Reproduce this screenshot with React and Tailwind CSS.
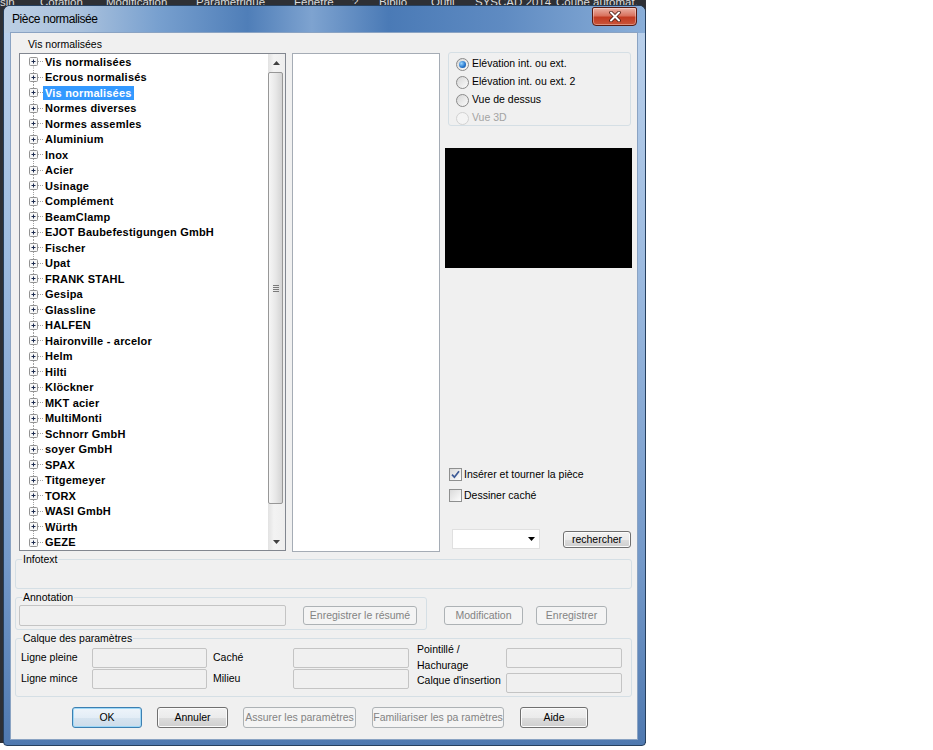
import React from "react";

const treeItems = [
  "Vis normalisées",
  "Ecrous normalisés",
  "Vis normalisées",
  "Normes diverses",
  "Normes assemles",
  "Aluminium",
  "Inox",
  "Acier",
  "Usinage",
  "Complément",
  "BeamClamp",
  "EJOT Baubefestigungen GmbH",
  "Fischer",
  "Upat",
  "FRANK STAHL",
  "Gesipa",
  "Glassline",
  "HALFEN",
  "Haironville - arcelor",
  "Helm",
  "Hilti",
  "Klöckner",
  "MKT acier",
  "MultiMonti",
  "Schnorr GmbH",
  "soyer GmbH",
  "SPAX",
  "Titgemeyer",
  "TORX",
  "WASI GmbH",
  "Würth",
  "GEZE",
];

const menu = [
  ["sin", "w-[40px]"],
  ["Cotation", "w-[66px]"],
  ["Modification", "w-[90px]"],
  ["Paramétrique", "w-[98px]"],
  ["Fenêtre", "w-[58px]"],
  ["?", "w-[27px]"],
  ["Biblio", "w-[52px]"],
  ["Outil", "w-[44px]"],
  ["SYSCAD 2014", "w-[81px]"],
  ["Coupe automat.", "w-[90px]"],
];

function Btn({ children, disabled, isDefault, className = "" }) {
  let look =
    "border-[#707070] text-black bg-[linear-gradient(#f2f2f2_0%,#ebebeb_50%,#dddddd_51%,#cfcfcf_100%)] shadow-[inset_0_0_0_1px_#fbfbfb]";
  if (disabled) look = "border-[#adb2b5] bg-[#f4f4f4] text-[#838383]";
  if (isDefault)
    look =
      "border-[#3c7fb1] text-black bg-[linear-gradient(#eef4fa_0%,#e3edf6_50%,#d6e4f0_51%,#cddcea_100%)] shadow-[inset_0_0_0_1px_#9ed8f7]";
  return (
    <div
      className={`flex shrink-0 items-center justify-center whitespace-nowrap rounded-[3px] border text-[10.5px] leading-none ${look} ${className}`}
    >
      {children}
    </div>
  );
}

function Field({ className = "" }) {
  return <div className={`rounded-[2px] border border-[#c4c4c4] bg-[#f0f0f0] ${className}`} />;
}

function GroupBox({ label, className = "", children }) {
  return (
    <div className={`shrink-0 rounded-[3px] border border-[#d5dfe5] ${className}`}>
      {label && (
        <div className="-mt-[7px] ml-[6px] w-fit bg-[#f0f0f0] px-[1px] leading-[13px]">{label}</div>
      )}
      {children}
    </div>
  );
}

function Radio({ label, checked, disabled }) {
  return (
    <div className="flex h-[18px] items-center pl-[7px]">
      <div
        className={`flex h-[13px] w-[13px] items-center justify-center rounded-full border ${
          disabled
            ? "border-[#d2d2d2] bg-[#f4f4f4]"
            : "border-[#8a8a8a] bg-[linear-gradient(135deg,#d6d6d6,#fbfbfb)]"
        }`}
      >
        {checked && (
          <div className="h-[7px] w-[7px] rounded-full bg-[radial-gradient(circle_at_35%_35%,#9ad6ff,#2a7bd0_55%,#0c3f8c)]" />
        )}
      </div>
      <span className={`ml-[3px] ${disabled ? "text-[#a3a3a3]" : ""}`}>{label}</span>
    </div>
  );
}

function Check({ label, checked }) {
  return (
    <div className="flex h-[21px] items-center pl-[4px]">
      <div className="flex h-[13px] w-[13px] items-center justify-center border border-[#8e8f8f] bg-[linear-gradient(135deg,#dadada,#fdfdfd)]">
        {checked && (
          <svg width="9" height="9" viewBox="0 0 9 9">
            <path d="M1 4.6 L3.4 7.2 L8 1.2" fill="none" stroke="#3d5a96" strokeWidth="1.7" />
          </svg>
        )}
      </div>
      <span className="ml-[2px]">{label}</span>
    </div>
  );
}

function TreeRow({ label, first, last, selected }) {
  return (
    <div className="flex h-[15.5px] items-center pl-[9px]">
      <svg width="14" height="15.5" viewBox="0 0 14 15.5" className="shrink-0">
        <line
          x1="4.5"
          y1={first ? 7.5 : 0}
          x2="4.5"
          y2={last ? 7.5 : 15.5}
          stroke="#a0a0a0"
          strokeDasharray="1 1"
        />
        <line x1="9" y1="7.5" x2="14" y2="7.5" stroke="#a0a0a0" strokeDasharray="1 1" />
        <rect x="0.5" y="3.5" width="8" height="8" rx="1" fill="#f7f7f7" stroke="#939393" />
        <path d="M2.5 7.5h4M4.5 5.5v4" stroke="#1d2b4f" />
      </svg>
      <span
        className={`whitespace-nowrap px-[2px] text-[11px] font-bold leading-[14px] tracking-[0.2px] ${
          selected ? "bg-[#3399ff] text-white" : "text-black"
        }`}
      >
        {label}
      </span>
    </div>
  );
}

function Scrollbar() {
  return (
    <div className="flex w-[17px] shrink-0 flex-col bg-[linear-gradient(90deg,#e2e2e2,#f3f3f3_35%,#eeeeee)]">
      <div className="flex h-[17px] items-center justify-center">
        <svg width="7" height="4" viewBox="0 0 7 4">
          <path d="M0 4h7L3.5 0z" fill="#404040" />
        </svg>
      </div>
      <div className="flex-1 pt-[1px]">
        <div className="flex h-[432px] w-[15px] items-center justify-center rounded-[2px] border border-[#979797] bg-[linear-gradient(90deg,#f6f6f6,#e8e8e8_50%,#d4d4d4)]">
          <div className="flex flex-col gap-[1px]">
            <div className="h-[1px] w-[6px] bg-[#7a7a7a]" />
            <div className="h-[1px] w-[6px] bg-[#7a7a7a]" />
            <div className="h-[1px] w-[6px] bg-[#7a7a7a]" />
            <div className="h-[1px] w-[6px] bg-[#7a7a7a]" />
          </div>
        </div>
      </div>
      <div className="flex h-[17px] items-center justify-center">
        <svg width="7" height="4" viewBox="0 0 7 4">
          <path d="M0 0h7L3.5 4z" fill="#404040" />
        </svg>
      </div>
    </div>
  );
}

export default function App() {
  return (
    <div className="relative h-[750px] w-[933px] overflow-hidden bg-white font-['Liberation_Sans',Arial,sans-serif] text-[10.5px] text-black">
      {/* application behind the dialog */}
      <div className="h-[743px] w-[646px] bg-[#2e3035]">
        <div className="flex h-[8px] overflow-hidden text-[11.5px] leading-[14px] text-[#dadada]">
          {menu.map(([t, w]) => (
            <span key={t} className={`-mt-[5px] shrink-0 whitespace-nowrap ${w}`}>
              {t}
            </span>
          ))}
        </div>
      </div>

      {/* dialog window */}
      <div className="absolute left-[3px] top-[5px] flex h-[741px] w-[643px] flex-col rounded-t-[7px] rounded-b-[4px] border border-[#26405f] bg-[linear-gradient(180deg,#bcd2ec_0%,#9dbbe0_35%,#7499c9_75%,#4f79b0_100%)] pb-[6px] pl-[7px] pr-[8px]">
        {/* title bar */}
        <div className="-ml-[7px] -mr-[8px] flex h-[27px] shrink-0 items-start justify-between rounded-t-[6px] bg-[linear-gradient(90deg,#bccfe4_0%,#a9c1dd_12%,#78a0cf_24%,#4f7eb8_38%,#7ea3d0_48%,#4a7ab6_60%,#5f8bc2_78%,#8aaed8_100%)] pl-[8px] pr-[8px]">
          <div className="pt-[6px] text-[12px] leading-[14px] tracking-[-0.4px] text-black">Pièce normalisée</div>
          <div className="mt-[1px] flex h-[19px] w-[45px] items-center justify-center rounded-b-[4px] rounded-t-[2px] border border-[#5a1b12] bg-[linear-gradient(180deg,#eab2a6_0%,#d9735f_45%,#c23b22_55%,#c9553a_100%)] shadow-[inset_0_0_0_1px_rgba(255,255,255,0.35)]">
            <svg width="12" height="11" viewBox="0 0 12 11">
              <path d="M2 1.5 L10 9.5 M10 1.5 L2 9.5" stroke="#4a1a10" strokeWidth="3.6" strokeLinecap="round" />
              <path d="M2 1.5 L10 9.5 M10 1.5 L2 9.5" stroke="#ffffff" strokeWidth="2" strokeLinecap="round" />
            </svg>
          </div>
        </div>

        {/* client area */}
        <div className="flex h-[706px] w-[626px] flex-col bg-[#f0f0f0] shadow-[0_0_0_1px_#8aa3c3]">
          <div className="h-[20px] pl-[17px] pt-[5px] leading-[13px]">Vis normalisées</div>

          {/* main row */}
          <div className="flex h-[499px] shrink-0">
            <div className="ml-[8px] flex h-[498px] w-[267px] shrink-0 border border-[#828790] bg-white">
              <div className="flex-1 overflow-hidden">
                {treeItems.map((t, i) => (
                  <TreeRow
                    key={i}
                    label={t}
                    first={i === 0}
                    last={i === treeItems.length - 1}
                    selected={i === 2}
                  />
                ))}
              </div>
              <Scrollbar />
            </div>

            <div className="ml-[6px] h-[499px] w-[148px] shrink-0 border border-[#a5acb5] bg-white" />

            <div className="ml-[5px] flex w-[187px] shrink-0 flex-col">
              <div className="-mt-[1px] ml-[3px] h-[74px] w-[183px] rounded-[3px] border border-[#d5dfe5] pt-[2px]">
                <Radio label="Elévation int. ou ext." checked />
                <Radio label="Elévation int. ou ext. 2" />
                <Radio label="Vue de dessus" />
                <Radio label="Vue 3D" disabled />
              </div>
              <div className="mt-[22px] h-[120px] w-[187px] bg-black" />
              <div className="mt-[196px]">
                <Check label="Insérer et tourner la pièce" checked />
                <Check label="Dessiner caché" />
              </div>
              <div className="mt-[23px] flex h-[20px] items-center">
                <div className="ml-[7px] flex h-[20px] w-[88px] items-center justify-end border border-[#e0e0e0] bg-white pr-[4px]">
                  <svg width="7" height="4" viewBox="0 0 7 4">
                    <path d="M0 0h7L3.5 4z" fill="#000" />
                  </svg>
                </div>
                <Btn className="ml-[23px] h-[17px] w-[68px]">rechercher</Btn>
              </div>
            </div>
          </div>

          {/* infotext */}
          <GroupBox label="Infotext" className="ml-[4px] mt-[7px] h-[30px] w-[617px]" />

          {/* annotation */}
          <div className="flex items-start">
            <GroupBox label="Annotation" className="ml-[4px] mt-[8px] h-[33px] w-[412px]">
              <div className="ml-[3px] mt-[1px] flex items-start">
                <Field className="h-[21px] w-[267px]" />
                <Btn disabled className="ml-[17px] mt-[1px] h-[19px] w-[114px]">
                  Enregistrer le résumé
                </Btn>
              </div>
            </GroupBox>
            <Btn disabled className="ml-[17px] mt-[17px] h-[19px] w-[79px]">
              Modification
            </Btn>
            <Btn disabled className="ml-[13px] mt-[17px] h-[19px] w-[71px]">
              Enregistrer
            </Btn>
          </div>

          {/* calque des paramètres */}
          <GroupBox label="Calque des paramètres" className="ml-[4px] mt-[8px] h-[59px] w-[617px]">
            <div className="flex">
              <div className="ml-[5px] mt-[3px] flex w-[71px] flex-col gap-[1px]">
                <div className="flex h-[20px] items-center">Ligne pleine</div>
                <div className="flex h-[20px] items-center">Ligne mince</div>
              </div>
              <div className="mt-[3px] flex w-[115px] flex-col gap-[1px]">
                <Field className="h-[20px]" />
                <Field className="h-[20px]" />
              </div>
              <div className="ml-[6px] mt-[3px] flex w-[80px] flex-col gap-[1px]">
                <div className="flex h-[20px] items-center">Caché</div>
                <div className="flex h-[20px] items-center">Milieu</div>
              </div>
              <div className="mt-[3px] flex w-[116px] flex-col gap-[1px]">
                <Field className="h-[20px]" />
                <Field className="h-[20px]" />
              </div>
              <div className="-mt-[3px] ml-[8px] w-[89px] leading-[15.5px]">
                <div>Pointillé /</div>
                <div>Hachurage</div>
                <div>Calque d'insertion</div>
              </div>
              <div className="mt-[3px] flex w-[116px] flex-col gap-[5px]">
                <Field className="h-[20px]" />
                <Field className="h-[20px]" />
              </div>
            </div>
          </GroupBox>

          {/* bottom buttons */}
          <div className="mt-[10px] flex">
            <Btn isDefault className="ml-[61px] h-[21px] w-[70px]">
              OK
            </Btn>
            <Btn className="ml-[15px] h-[21px] w-[71px]">Annuler</Btn>
            <Btn disabled className="ml-[15px] h-[21px] w-[113px]">
              Assurer les paramètres
            </Btn>
            <Btn disabled className="ml-[16px] h-[21px] w-[132px]">
              Familiariser les pa ramètres
            </Btn>
            <Btn className="ml-[16px] h-[21px] w-[68px]">Aide</Btn>
          </div>
        </div>
      </div>
    </div>
  );
}
